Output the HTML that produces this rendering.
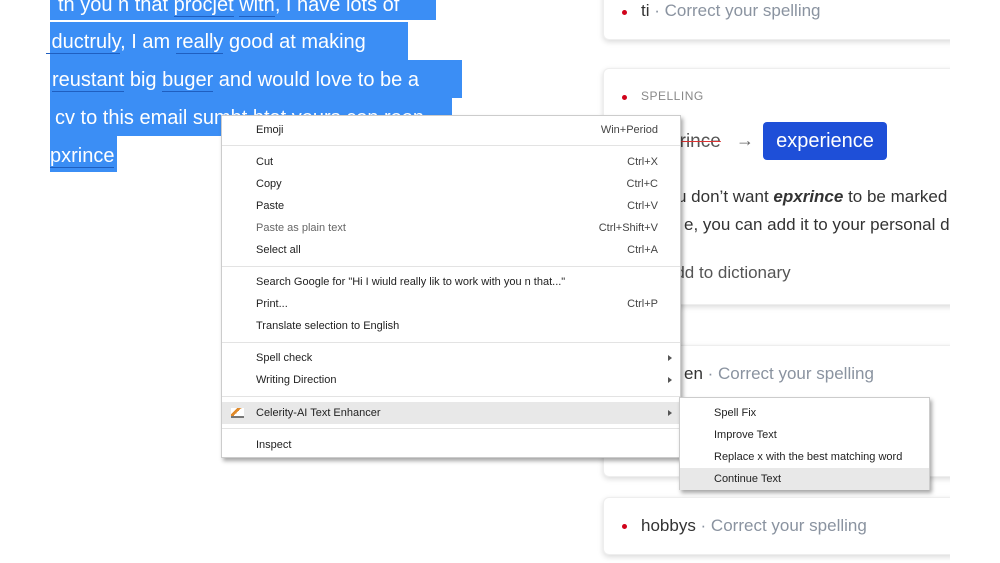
<!DOCTYPE html>
<html><head><style>
*{margin:0;padding:0;box-sizing:border-box}
body{width:1000px;height:563px;overflow:hidden;background:#fff;font-family:"Liberation Sans",sans-serif;position:relative}
.sel{position:absolute;background:#3b8ef5}
.ln{position:absolute;left:50px;color:#fff;font-size:20px;white-space:nowrap;line-height:24px}
.u{border-bottom:1.5px solid #1f5fc0}
.clip{position:absolute;left:0;top:0;width:950px;height:563px;overflow:hidden}
.card{position:absolute;left:603px;width:400px;background:#fff;border-radius:6px;box-shadow:0 2px 6px rgba(0,0,0,.15);border:1px solid #eee}
.dot{position:absolute;width:5px;height:5px;border-radius:50%;background:#d0021b}
.t{position:absolute;font-size:17px;white-space:nowrap;color:#333}
.g{color:#8a93a0}
.menu{position:absolute;background:#fff;border:1px solid #ccc;box-shadow:2px 3px 4px rgba(0,0,0,.35);font-size:11px;color:#222}
.it{position:absolute;left:0;right:0;height:22px;line-height:22px}
.it span{position:absolute;left:34px}
.it b{position:absolute;right:22px;font-weight:normal;color:#444}
.sep{position:absolute;left:0;right:0;height:1px;background:#e3e3e3}
.ar{position:absolute;right:8px;top:8px;width:0;height:0;border-left:4px solid #555;border-top:3px solid transparent;border-bottom:3px solid transparent}
</style></head><body>
<div class="sel" style="left:50px;top:-10px;width:386px;height:30px"></div>
<div class="sel" style="left:50px;top:22px;width:358px;height:38px"></div>
<div class="sel" style="left:50px;top:60px;width:412px;height:38px"></div>
<div class="sel" style="left:50px;top:98px;width:402px;height:38px"></div>
<div class="sel" style="left:50px;top:136px;width:67px;height:36px"></div>
<div class="ln" style="top:-7px;left:58px">th you n that <span class="u">procjet</span> <span class="u">with</span>, I have lots of</div>
<div class="ln" style="top:30px;left:46px"><span class="u">:ductruly</span>, I am <span class="u">really</span> good at making</div>
<div class="ln" style="top:68px;left:52px"><span class="u">reustant</span> big <span class="u">buger</span> and would love to be a</div>
<div class="ln" style="top:106px;left:55px">cv to this email sumbt btat yours con roon</div>
<div class="ln" style="top:144px;left:50px"><span class="u">pxrince</span></div>

<div class="clip">
<div class="card" style="top:-10px;height:50px"><div class="dot" style="left:18px;top:19px"></div><div class="t" style="left:37px;top:10px">ti <span class="g">· Correct your spelling</span></div></div>
<div class="card" style="top:68px;height:237px">
<div class="dot" style="left:18px;top:26px"></div><div class="t" style="left:37px;top:20px;font-size:12px;color:#888;letter-spacing:.5px">SPELLING</div>
<div class="t" style="left:45px;top:62px;font-size:19px;color:#555;text-decoration:line-through;text-decoration-color:#d33">epxrince</div>
<div class="t" style="left:132px;top:61px;font-size:18px;color:#666">→</div>
<div style="position:absolute;left:159px;top:53px;width:124px;height:38px;background:#1e4fd8;border-radius:4px;color:#fff;font-size:20px;line-height:38px;text-align:center">experience</div>
<div class="t" style="left:73px;top:118px">u don’t want <b><i>epxrince</i></b> to be marked as wrong</div>
<div class="t" style="left:80px;top:146px">e, you can add it to your personal dictionary</div>
<div class="t" style="left:60px;top:194px;color:#555">Add to dictionary</div>
</div>
<div class="card" style="top:345px;height:132px"><div class="t" style="left:80px;top:18px">en <span class="g">· Correct your spelling</span></div></div>
<div class="card" style="top:497px;height:58px"><div class="dot" style="left:18px;top:26px"></div><div class="t" style="left:37px;top:18px">hobbys <span class="g">· Correct your spelling</span></div></div>
</div>

<div class="menu" style="left:221px;top:115px;width:460px;height:343px">
<div class="it" style="top:3px"><span>Emoji</span><b>Win+Period</b></div>
<div class="sep" style="top:29px"></div>
<div class="it" style="top:35px"><span>Cut</span><b>Ctrl+X</b></div>
<div class="it" style="top:57px"><span>Copy</span><b>Ctrl+C</b></div>
<div class="it" style="top:79px"><span>Paste</span><b>Ctrl+V</b></div>
<div class="it" style="top:101px;color:#666"><span>Paste as plain text</span><b>Ctrl+Shift+V</b></div>
<div class="it" style="top:123px"><span>Select all</span><b>Ctrl+A</b></div>
<div class="sep" style="top:150px"></div>
<div class="it" style="top:155px"><span>Search Google for "Hi I wiuld really lik to work with you n that..."</span></div>
<div class="it" style="top:177px"><span>Print...</span><b>Ctrl+P</b></div>
<div class="it" style="top:199px"><span>Translate selection to English</span></div>
<div class="sep" style="top:226px"></div>
<div class="it" style="top:231px"><span>Spell check</span><i class="ar"></i></div>
<div class="it" style="top:253px"><span>Writing Direction</span><i class="ar"></i></div>
<div class="sep" style="top:280px"></div>
<div class="it" style="top:286px;background:#e8e8e8"><i style="position:absolute;left:9px;top:6px;width:13px;height:10px;background:linear-gradient(135deg,#fff 30%,#e08a2a 30%,#e08a2a 50%,#fff 50%);border-bottom:2px solid #777"></i><span>Celerity-AI Text Enhancer</span><i class="ar"></i></div>
<div class="sep" style="top:312px"></div>
<div class="it" style="top:318px"><span>Inspect</span></div>
</div>

<div class="menu" style="left:679px;top:397px;width:251px;height:93px">
<div class="it" style="top:4px"><span>Spell Fix</span></div>
<div class="it" style="top:26px"><span>Improve Text</span></div>
<div class="it" style="top:48px"><span>Replace x with the best matching word</span></div>
<div class="it" style="top:70px;background:#e8e8e8"><span>Continue Text</span></div>
</div>
</body></html>
